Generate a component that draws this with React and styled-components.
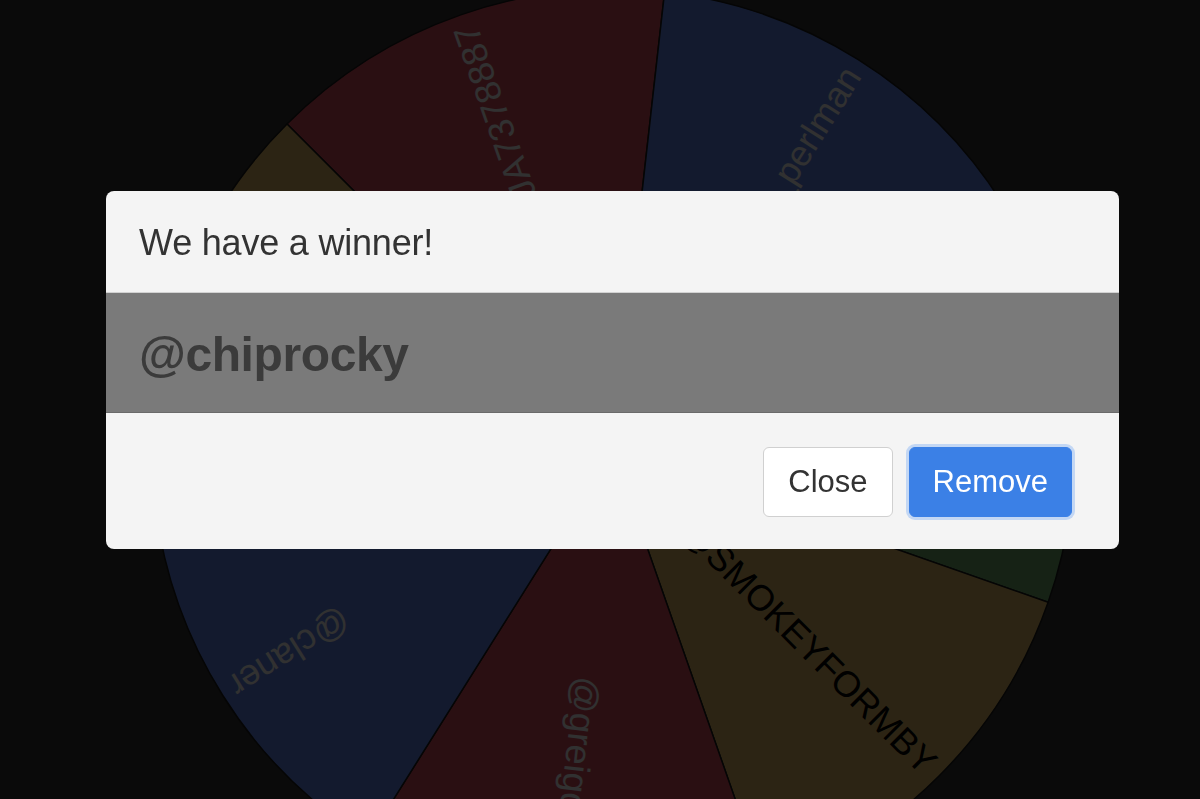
import React from "react";
import styled, { createGlobalStyle } from "styled-components";

const GlobalStyle = createGlobalStyle`
  html, body {
    margin: 0;
    padding: 0;
    background: #333333;
    font-family: "Liberation Sans", Arial, sans-serif;
  }
`;

const R = 461;
const C = 461;

const entries = [
  { name: "@JA7378887", color: "#d24b5a", text: "#f2f2f2" },
  { name: "@dan_perlman", color: "#5f82e3", text: "#f2f2f2" },
  { name: "@mattgreen", color: "#6eaa6c", text: "#f2f2f2" },
  { name: "@SMOKEYFORMBY", color: "#dcb464", text: "#000000" },
  { name: "@greigdavies", color: "#d24b5a", text: "#f2f2f2" },
  { name: "@claner", color: "#5f82e3", text: "#f2f2f2" },
  { name: "@tomwilkins", color: "#dcb464", text: "#000000" },
];

const START = 315;
const STEP = 360 / entries.length;

const point = (deg, r) => {
  const a = (deg * Math.PI) / 180;
  return [C + r * Math.sin(a), C - r * Math.cos(a)];
};

const slicePath = (a0, a1) => {
  const [x0, y0] = point(a0, R);
  const [x1, y1] = point(a1, R);
  return `M ${C} ${C} L ${x0} ${y0} A ${R} ${R} 0 0 1 ${x1} ${y1} Z`;
};

const Stage = styled.div`
  height: 100vh;
  overflow: hidden;
  background: #333333;
`;

const WheelSvg = styled.svg`
  display: block;
  margin: -11px 0 0 152px;
`;

const Label = styled.text`
  font-family: "Liberation Sans", Arial, sans-serif;
  font-size: 36px;
`;

const Overlay = styled.div`
  position: fixed;
  inset: 0;
  background: rgba(0, 0, 0, 0.8);
  padding: 191px 0 0 106px;
`;

const Modal = styled.div`
  width: 1013px;
  background: #f4f4f4;
  border-radius: 8px;
  overflow: hidden;
`;

const Header = styled.div`
  padding: 31px 33px 28px;
  border-bottom: 1px solid #d2d2d2;
  font-size: 36px;
  line-height: 42px;
  letter-spacing: -0.2px;
  color: #333333;
`;

const Body = styled.div`
  background: #7a7a7a;
  padding: 34px 33px 29px;
  border-bottom: 1px solid #6a6a6a;
  font-size: 48px;
  line-height: 56px;
  font-weight: bold;
  letter-spacing: -0.4px;
  color: #3b3b3b;
`;

const Footer = styled.div`
  display: flex;
  justify-content: flex-end;
  align-items: center;
  gap: 16px;
  padding: 34px 47px 32px 0;
`;

const Button = styled.button`
  height: 70px;
  padding: 0 ${(p) => (p.$primary ? "23px" : "24px")};
  font-family: "Liberation Sans", Arial, sans-serif;
  font-size: 31px;
  border-radius: 6px;
  border: 1px solid ${(p) => (p.$primary ? "#3b80e6" : "#d0d0d0")};
  background: ${(p) => (p.$primary ? "#3b80e6" : "#ffffff")};
  color: ${(p) => (p.$primary ? "#ffffff" : "#333333")};
  box-shadow: ${(p) => (p.$primary ? "0 0 0 3px #c3d7f4" : "none")};
  cursor: pointer;
`;

const Wheel = () => (
  <WheelSvg width={R * 2} height={R * 2} viewBox={`0 0 ${R * 2} ${R * 2}`}>
    {entries.map((e, i) => {
      const a0 = START + i * STEP;
      const a1 = a0 + STEP;
      const mid = a0 + STEP / 2;
      return (
        <g key={e.name}>
          <path d={slicePath(a0, a1)} fill={e.color} stroke="#1a1a1a" strokeWidth="1.5" />
          <Label
            x={C + R - 12}
            y={C}
            fill={e.text}
            textAnchor="end"
            dominantBaseline="central"
            transform={`rotate(${mid - 90} ${C} ${C})`}
          >
            {e.name}
          </Label>
        </g>
      );
    })}
  </WheelSvg>
);

export default function App() {
  return (
    <>
      <GlobalStyle />
      <Stage>
        <Wheel />
      </Stage>
      <Overlay>
        <Modal>
          <Header>We have a winner!</Header>
          <Body>@chiprocky</Body>
          <Footer>
            <Button>Close</Button>
            <Button $primary>Remove</Button>
          </Footer>
        </Modal>
      </Overlay>
    </>
  );
}
